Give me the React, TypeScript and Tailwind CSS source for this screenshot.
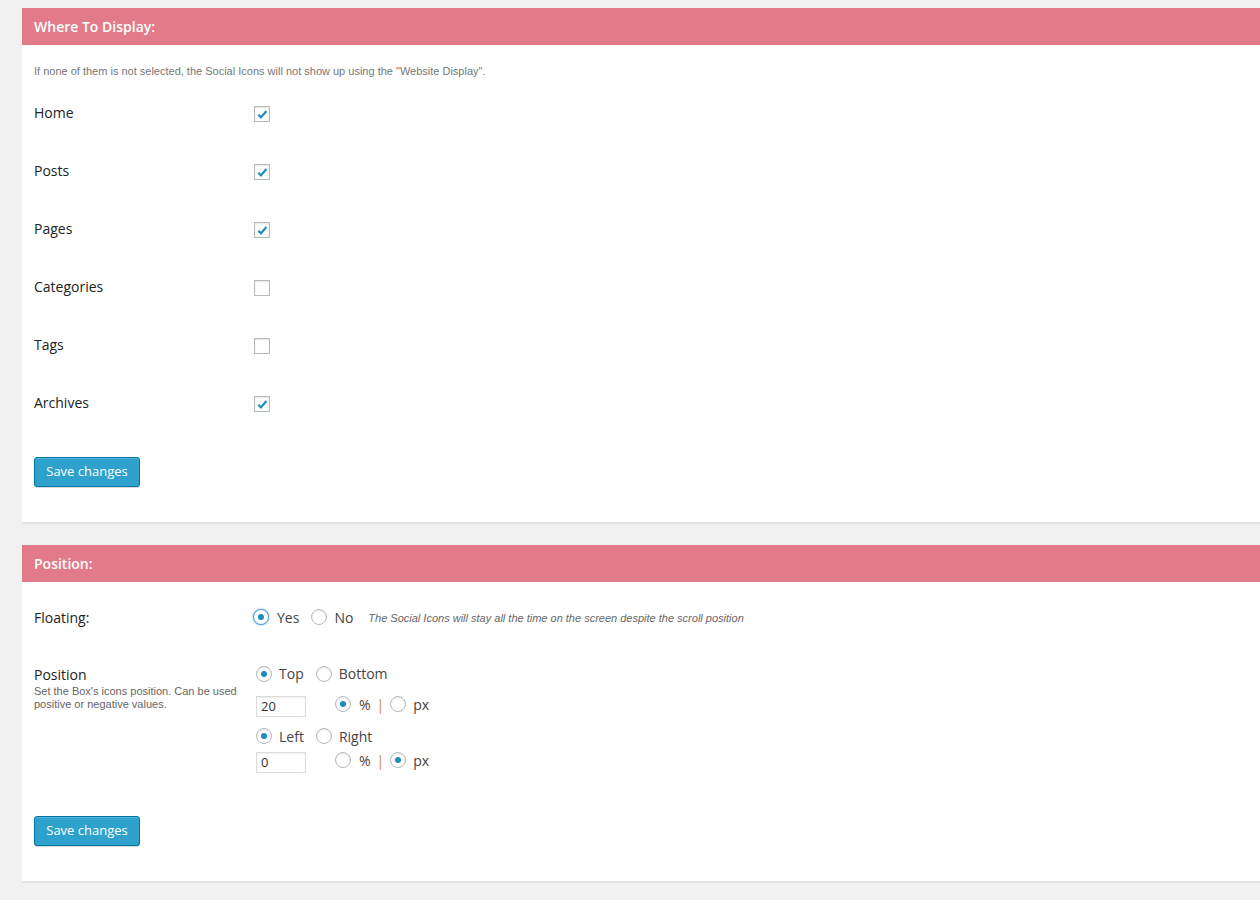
import React from "react";

const sans = { fontFamily: '"Open Sans", "Liberation Sans", sans-serif' };
const arial = { fontFamily: '"Liberation Sans", Arial, sans-serif' };

function Checkbox({ checked }: { checked: boolean }) {
  return (
    <span className="relative block w-[16px] h-[16px] border border-[#b4b9be] bg-white shadow-[inset_0_1px_2px_rgba(0,0,0,0.1)]">
      {checked && (
        <svg viewBox="0 0 20 20" className="absolute left-[-1px] top-[-1px] w-[17px] h-[17px]">
          <path d="M5.2 10.2 L8.2 13.4 L14.6 5.8" fill="none" stroke="#1e8cbe" strokeWidth="2.6" strokeLinecap="butt" strokeLinejoin="miter" />
        </svg>
      )}
    </span>
  );
}

function Radio({ checked, focus, className = "" }: { checked: boolean; focus?: boolean; className?: string }) {
  return (
    <span
      className={
        "flex items-center justify-center w-[16px] h-[16px] rounded-full bg-white shrink-0 " +
        (focus
          ? "border border-[#5b9dd9] shadow-[0_0_2px_rgba(30,140,190,0.8)] "
          : "border border-[#b4b9be] shadow-[inset_0_1px_2px_rgba(0,0,0,0.1)] ") +
        className
      }
    >
      {checked && <span className="w-[6px] h-[6px] rounded-full bg-[#1e8cbe]" />}
    </span>
  );
}

function Header({ title }: { title: string }) {
  return (
    <div className="h-[37px] bg-[#e37a8a] px-[12px] flex items-center text-white font-semibold text-[14px]" style={sans}>
      {title}
    </div>
  );
}

function SaveButton() {
  return (
    <button
      className="h-[30px] w-[106px] rounded-[3px] bg-[#2ea2cc] border border-[#0074a2] text-white text-[13px] shadow-[inset_0_1px_0_rgba(120,200,230,0.5),0_1px_0_rgba(0,0,0,0.15)]"
      style={sans}
    >
      Save changes
    </button>
  );
}

function Input({ value }: { value: string }) {
  return (
    <div
      className="w-[50px] h-[21px] border border-[#ddd] bg-white shadow-[inset_0_1px_2px_rgba(0,0,0,0.07)] pl-[4px] text-[13px] text-[#333] flex items-center"
      style={sans}
    >
      {value}
    </div>
  );
}

function UnitRow({ percent }: { percent: boolean }) {
  return (
    <div className="ml-[29px] h-[16px] flex items-center">
      <Radio checked={percent} />
      <span className="ml-[8px]">%</span>
      <span className="ml-[6px] text-[#d88a35]">|</span>
      <Radio checked={!percent} className="ml-[6px]" />
      <span className="ml-[7px]">px</span>
    </div>
  );
}

export default function App() {
  const items: [string, boolean][] = [
    ["Home", true],
    ["Posts", true],
    ["Pages", true],
    ["Categories", false],
    ["Tags", false],
    ["Archives", true],
  ];
  return (
    <div className="min-h-[900px] bg-[#f1f1f1] pt-[8px] pl-[22px] overflow-hidden">
      <div className="bg-white border-b border-[#e2e2e2] shadow-[0_1px_1px_rgba(0,0,0,0.04)]">
        <Header title="Where To Display:" />
        <div className="px-[12px] pt-[19px] pb-[35px]">
          <div className="text-[11px] leading-[14px] text-[#777]" style={arial}>
            If none of them is not selected, the Social Icons will not show up using the "Website Display".
          </div>
          <div className="mt-[6px]">
            {items.map(([label, checked]) => (
              <div key={label} className="h-[58px] flex items-center">
                <div className="w-[220px] text-[14px] text-[#222] pb-[1px]" style={sans}>
                  {label}
                </div>
                <div className="flex items-center pt-[2px]">
                  <Checkbox checked={checked} />
                </div>
              </div>
            ))}
          </div>
          <div className="mt-[25px]">
            <SaveButton />
          </div>
        </div>
      </div>

      <div className="mt-[22px] bg-white border-b border-[#e2e2e2] shadow-[0_1px_1px_rgba(0,0,0,0.04)]">
        <Header title="Position:" />
        <div className="px-[12px] pb-[35px]">
          <div className="h-[70px] flex items-center">
            <div className="w-[219px] text-[14px] text-[#222]" style={sans}>
              Floating:
            </div>
            <div className="flex items-center text-[14px] text-[#444]" style={sans}>
              <Radio checked focus />
              <span className="ml-[8px]">Yes</span>
              <Radio checked={false} className="ml-[12px]" />
              <span className="ml-[7px]">No</span>
              <span className="ml-[15px] text-[11px] italic text-[#666] pt-[2px]" style={arial}>
                The Social Icons will stay all the time on the screen despite the scroll position
              </span>
            </div>
          </div>
          <div className="flex mt-[11px]">
            <div className="w-[222px] pt-[2px]">
              <div className="text-[14px] leading-[20px] text-[#222]" style={sans}>
                Position
              </div>
              <div className="text-[11px] leading-[13px] text-[#666]" style={arial}>
                Set the Box's icons position. Can be used positive or negative values.
              </div>
            </div>
            <div className="text-[14px] text-[#444]" style={sans}>
              <div className="h-[21px] flex items-center">
                <Radio checked />
                <span className="ml-[7px]">Top</span>
                <Radio checked={false} className="ml-[12px]" />
                <span className="ml-[7px]">Bottom</span>
              </div>
              <div className="mt-[12px] flex items-start">
                <Input value="20" />
                <UnitRow percent />
              </div>
              <div className="mt-[8px] h-[22px] flex items-center">
                <Radio checked />
                <span className="ml-[7px]">Left</span>
                <Radio checked={false} className="ml-[12px]" />
                <span className="ml-[7px]">Right</span>
              </div>
              <div className="mt-[5px] flex items-start">
                <Input value="0" />
                <UnitRow percent={false} />
              </div>
            </div>
          </div>
          <div className="mt-[43px]">
            <SaveButton />
          </div>
        </div>
      </div>
    </div>
  );
}
